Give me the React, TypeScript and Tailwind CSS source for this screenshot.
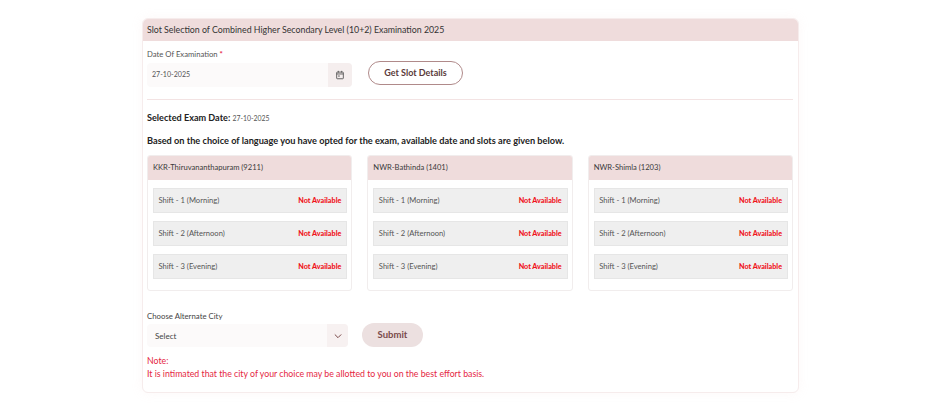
import React from "react";

const cities = ["KKR-Thiruvananthapuram (9211)", "NWR-Bathinda (1401)", "NWR-Shimla (1203)"];
const shifts = ["Shift - 1 (Morning)", "Shift - 2 (Afternoon)", "Shift - 3 (Evening)"];

function CityCard({ name }: { name: string }) {
  return (
    <div className="w-[205.5px] h-[136px] rounded-[3px] border border-[#f1eded] bg-white overflow-hidden">
      <div className="h-[24px] bg-[#efdcdc] pl-[5px] flex items-center text-[7.6px] text-[#3a3a3a]">{name}</div>
      <div className="pl-[5px] pr-[4px] pt-[8px] flex flex-col gap-[8px]">
        {shifts.map((s) => (
          <div key={s} className="h-[25px] bg-[#efefef] border border-[#e6e6e6] flex items-center justify-between pl-[4.5px] pr-[5px] text-[7.6px]">
            <span className="text-[#555555]">{s}</span>
            <span className="font-black leading-[12px] text-[#f0141c] text-[7.2px]">Not Available</span>
          </div>
        ))}
      </div>
    </div>
  );
}

export default function App() {
  return (
    <div className="w-[936px] h-[411px] bg-white overflow-hidden pt-[18px] pl-[142px] font-['Lato','Noto_Sans',sans-serif]">
      <div className="w-[657px] h-[375px] rounded-[6px] border border-[#f6ecec] bg-white overflow-hidden shadow-[0_0_12px_rgba(240,200,200,0.12)]">
        <div className="h-[22px] bg-[#efdcdc] flex items-center pl-[4px] text-[8.8px] text-[#333333]">
          Slot Selection of Combined Higher Secondary Level (10+2) Examination 2025
        </div>
        <div className="pl-[4px] pr-[5px]">
          <div className="mt-[7px] text-[7.7px] leading-[12px] text-[#555555]">
            Date Of Examination <span className="text-[#e5173f] font-bold">*</span>
          </div>
          <div className="mt-[2px] flex items-start">
            <div className="mt-[1px] w-[205px] h-[24px] rounded-[4px] bg-[#fcfafa] flex items-center justify-between overflow-hidden">
              <span className="pl-[5px] text-[7.1px] text-[#555555]">27-10-2025</span>
              <span className="w-[24px] h-[24px] bg-[#f5eeee] flex items-center justify-center">
                <svg width="10" height="10" viewBox="0 0 24 24" fill="none" stroke="#4a4a4a" strokeWidth="2">
                  <rect x="4" y="5" width="16" height="16" rx="1.5" />
                  <path d="M4 9.5h16M8 2v4M16 2v4" />
                  <rect x="8" y="13" width="3" height="3" fill="#4a4a4a" stroke="none" />
                </svg>
              </span>
            </div>
            <button className="ml-[16px] w-[95px] h-[24px] -mt-[1px] rounded-full border border-[#b08a8a] bg-white text-[9px] font-bold text-[#5a3a3a]">
              Get Slot Details
            </button>
          </div>
          <div className="mt-[12px] h-px bg-[#f3e3e3]" />
          <div className="mt-[12px] text-[9.1px] leading-[12px] font-bold text-[#222222]">
            Selected Exam Date: <span className="font-normal text-[6.9px] text-[#555555]">27-10-2025</span>
          </div>
          <div className="mt-[11px] text-[9.2px] leading-[12px] font-bold text-[#222222]">
            Based on the choice of language you have opted for the exam, available date and slots are given below.
          </div>
          <div className="mt-[8px] flex gap-[15px]">
            {cities.map((c) => (
              <CityCard key={c} name={c} />
            ))}
          </div>
          <div className="mt-[19px] text-[7.8px] leading-[12px] text-[#444444]">Choose Alternate City</div>
          <div className="mt-[1px] flex items-start">
            <div className="mt-[1px] w-[201px] h-[23px] rounded-[4px] bg-[#fcfafa] flex items-center justify-between overflow-hidden">
              <span className="pl-[8px] text-[8px] text-[#444444]">Select</span>
              <span className="w-[21px] h-[23px] bg-[#f7f1f1] flex items-center justify-center">
                <svg width="10" height="10" viewBox="0 0 24 24" fill="none" stroke="#7a4a4a" strokeWidth="2.4" strokeLinecap="round" strokeLinejoin="round">
                  <path d="M5 9l7 7 7-7" />
                </svg>
              </span>
            </div>
            <button className="ml-[14px] w-[61px] h-[24px] rounded-full bg-[#ece0e0] text-[9.5px] font-bold text-[#7a4a4a]">
              Submit
            </button>
          </div>
          <div className="mt-[7px] text-[8.75px] leading-[13px] text-[#e5273f]">
            <div>Note:</div>
            <div>It is intimated that the city of your choice may be allotted to you on the best effort basis.</div>
          </div>
        </div>
      </div>
    </div>
  );
}
